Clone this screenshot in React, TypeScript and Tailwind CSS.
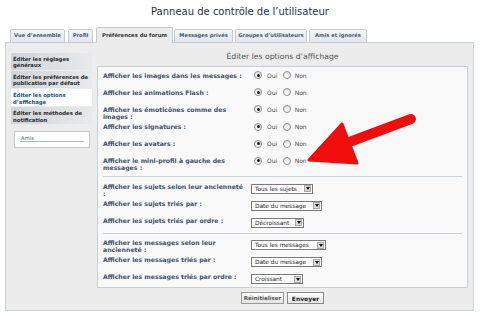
import React from "react";

const F = "font-['DejaVu_Sans',Verdana,sans-serif]";

function Radio({ checked }: { checked?: boolean }) {
  return (
    <span className="w-[8px] h-[8px] rounded-full border border-[#8d8d8d] bg-gradient-to-b from-[#e2e2e2] to-white flex items-center justify-center shrink-0">
      {checked && <span className="w-[3px] h-[3px] rounded-full bg-[#1e1e1e]" />}
    </span>
  );
}

function Sel({ text, w }: { text: string; w: string }) {
  return (
    <div className={`${w} h-[10px] border border-[#7b7b7b] bg-white flex items-center justify-between pl-[3px] pr-[1px] mt-[1px]`}>
      <span className="text-[5.8px] leading-[8px] text-[#222] whitespace-nowrap">{text}</span>
      <span className="w-[7px] h-[7px] bg-[#dcdcdc] border border-[#a8a8a8] flex items-center justify-center">
        <svg width="4" height="3" viewBox="0 0 4 3">
          <polygon points="0,0 4,0 2,3" fill="#111" />
        </svg>
      </span>
    </div>
  );
}

function RadioRow({ label }: { label: string }) {
  return (
    <div className="flex items-start h-[17.2px]">
      <div className="w-[148px] pr-[6px] font-bold text-[6.2px] leading-[7px] text-[#425067]">{label}</div>
      <div className="flex items-center ml-[3px] mt-[-0.5px]">
        <Radio checked />
        <span className="ml-[5px] text-[6px] leading-[7px] text-[#4a4a4a]">Oui</span>
        <span className="ml-[6px]"><Radio /></span>
        <span className="ml-[3.5px] text-[6px] leading-[7px] text-[#4a4a4a]">Non</span>
      </div>
    </div>
  );
}

function SelRow({ label, text, w }: { label: string; text: string; w: string }) {
  return (
    <div className="flex items-start h-[17px]">
      <div className="w-[148px] pr-[6px] font-bold text-[6.2px] leading-[7px] text-[#425067]">{label}</div>
      <Sel text={text} w={w} />
    </div>
  );
}

export default function App() {
  const tabBase =
    "h-[14px] border border-[#c3cbd4] rounded-t-[2px] bg-gradient-to-b from-[#f3f5f7] to-[#e3e7eb] flex items-center justify-center font-bold text-[5.2px] text-[#41587a] whitespace-nowrap";
  const item =
    "h-[17px] px-[2px] pt-[2.5px] font-bold text-[5.3px] leading-[6.5px] text-[#2a2a2a] bg-gradient-to-r from-[#cfd4da] to-[#e8e9ea]";
  return (
    <div className={`relative w-[480px] h-[316px] bg-white overflow-hidden ${F}`}>
      <div className="h-[27px] pt-[7px] text-center text-[10px] leading-[10px] text-[#28313f]">
        Panneau de contrôle de l’utilisateur
      </div>
      <div className="flex items-end h-[16px] -mb-[1px] relative z-10">
        <div className={`${tabBase} ml-[10px] w-[55px]`}>Vue d’ensemble</div>
        <div className={`${tabBase} ml-[3px] w-[25px]`}>Profil</div>
        <div className="ml-[3px] w-[77px] h-[16px] border border-b-0 border-[#c3cbd4] rounded-t-[2px] bg-[#ececec] flex items-center justify-center font-bold text-[5.3px] text-[#333] whitespace-nowrap">
          Préférences du forum
        </div>
        <div className={`${tabBase} ml-[1px] w-[59px]`}>Messages privés</div>
        <div className={`${tabBase} ml-[2px] w-[72px]`}>Groupes d’utilisateurs</div>
        <div className={`${tabBase} ml-[2px] w-[58px]`}>Amis et ignorés</div>
      </div>
      <div className="ml-[5px] w-[469px] h-[269px] border border-[#cdd2d7] bg-[#ececec] flex pt-[10px] pl-[5px] pr-[4px]">
        <div className="w-[81px] flex flex-col gap-[1px]">
          <div className={item}>Éditer les réglages généraux</div>
          <div className={item}>Éditer les préférences de publication par défaut</div>
          <div className="h-[17px] px-[2px] pt-[3px] font-bold text-[5.3px] leading-[6.5px] text-[#105289] bg-white">
            Éditer les options d’affichage
          </div>
          <div className="h-[17px] px-[2px] pt-[3px] font-bold text-[5.3px] leading-[6.5px] text-[#2a2a2a] bg-gradient-to-r from-[#cfd4da] to-[#e8e9ea]">
            Éditer les méthodes de notification
          </div>
          <div className="mt-[6px] ml-[3px] w-[76px] h-[17px] bg-white border border-[#c8c8c8] px-[5px] pt-[3px]">
            <div className="border-b border-[#a9b4bf] text-[5.3px] leading-[6px] text-[#536482] pl-[1px]">Amis</div>
          </div>
        </div>
        <div className="ml-[5px] w-[371px] flex flex-col">
          <div className="h-[8px] text-center text-[7.7px] leading-[8px] text-[#555]">Éditer les options d’affichage</div>
          <div className="mt-[5px] h-[222px] border border-[#c7d0d9] bg-[#f9f9f9] px-[5px]">
            <div className="pt-[4.5px] h-[109px]">
              <RadioRow label="Afficher les images dans les messages :" />
              <RadioRow label="Afficher les animations Flash :" />
              <RadioRow label="Afficher les émoticônes comme des images :" />
              <RadioRow label="Afficher les signatures :" />
              <RadioRow label="Afficher les avatars :" />
              <RadioRow label="Afficher le mini-profil à gauche des messages :" />
            </div>
            <div className="border-t border-[#c9d3dd] pt-[5.5px] h-[57px]">
              <SelRow label="Afficher les sujets selon leur ancienneté :" text="Tous les sujets" w="w-[62px]" />
              <SelRow label="Afficher les sujets triés par :" text="Date du message" w="w-[71px]" />
              <SelRow label="Afficher les sujets triés par ordre :" text="Décroissant" w="w-[53px]" />
            </div>
            <div className="border-t border-[#c9d3dd] pt-[5px]">
              <SelRow label="Afficher les messages selon leur ancienneté :" text="Tous les messages" w="w-[75px]" />
              <SelRow label="Afficher les messages triés par :" text="Date du message" w="w-[71px]" />
              <SelRow label="Afficher les messages triés par ordre :" text="Croissant" w="w-[52px]" />
            </div>
          </div>
          <div className="mt-[4px] flex justify-center gap-[3px]">
            <div className="w-[43px] h-[12px] border border-[#9a9a9a] bg-gradient-to-b from-white to-[#e4e4e4] flex items-center justify-center font-bold text-[5.5px] text-[#555]">
              Réinitialiser
            </div>
            <div className="w-[37px] h-[12px] border border-[#8a8a8a] bg-gradient-to-b from-white to-[#e4e4e4] flex items-center justify-center font-bold text-[6px] text-[#222]">
              Envoyer
            </div>
          </div>
        </div>
      </div>
      <svg className="absolute inset-0 pointer-events-none" width="480" height="316" viewBox="0 0 480 316">
        <line x1="411" y1="119" x2="352" y2="141" stroke="#f20c0c" strokeWidth="10" strokeLinecap="round" />
        <polygon points="309,160 342,124 357,163" fill="#f20c0c" stroke="#f20c0c" strokeWidth="3" strokeLinejoin="round" />
      </svg>
    </div>
  );
}
